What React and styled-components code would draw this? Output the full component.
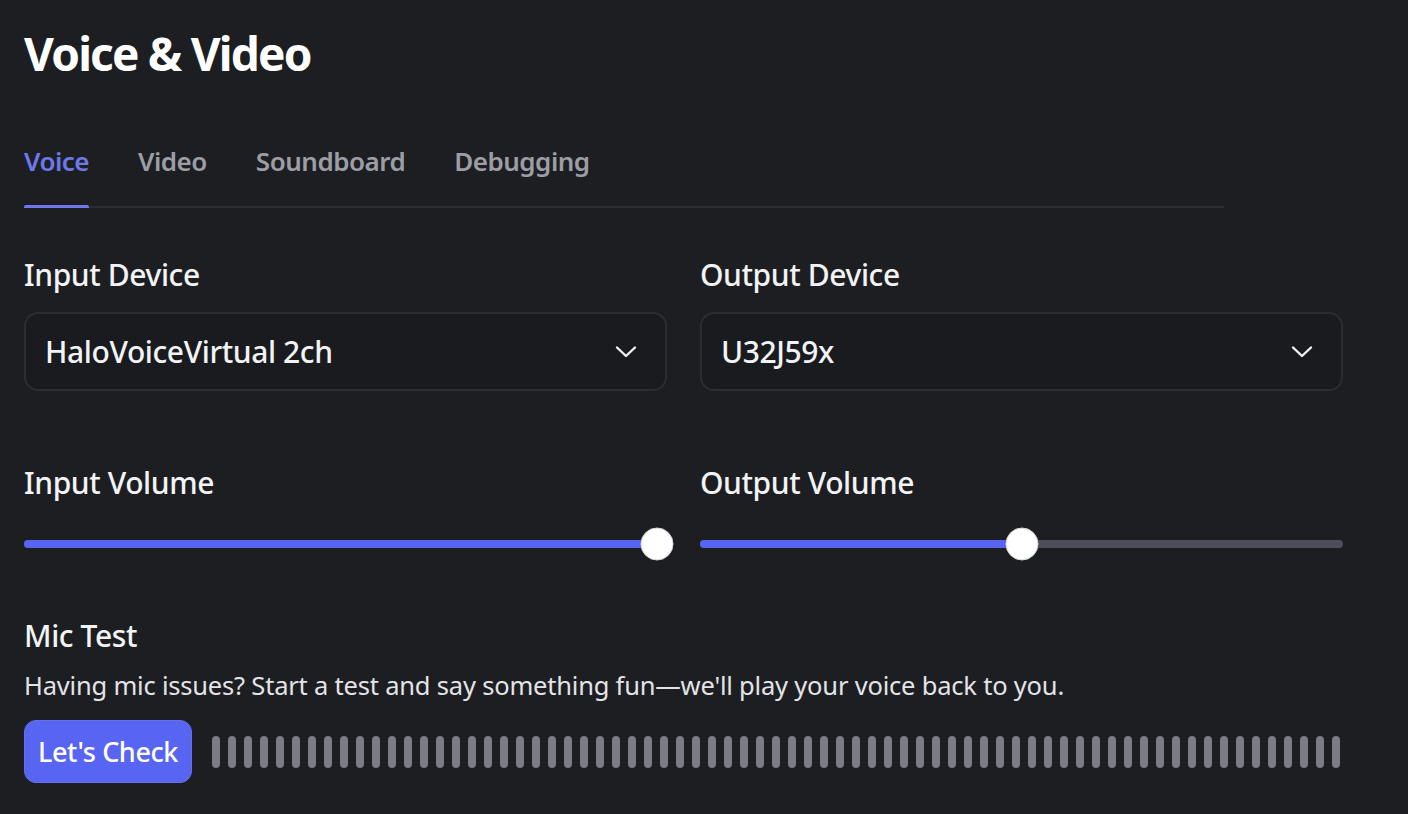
import React from 'react';
import styled, { createGlobalStyle } from 'styled-components';

const GlobalStyle = createGlobalStyle`
  body {
    margin: 0;
    background: #1d1e21;
    font-family: 'Noto Sans', 'Open Sans', sans-serif;
    color: #f2f3f5;
  }
`;

const Page = styled.div`
  padding: 23px 24px 0 24px;
  width: 1320px;
`;

const Title = styled.h1`
  margin: 0;
  font-size: 46px;
  font-weight: 700;
  line-height: 60px;
  color: #ffffff;
  letter-spacing: -1.8px;
`;

const TabList = styled.div`
  display: flex;
  gap: 49px;
  width: 1200px;
  margin-top: 62px;
  border-bottom: 2px solid #2c2d32;
`;

const Tab = styled.div`
  position: relative;
  font-size: 26px;
  font-weight: 600;
  line-height: 32px;
  padding-bottom: 29px;
  color: ${({ active }) => (active ? '#6e78ea' : '#9c9da5')};
  letter-spacing: -0.5px;

  &::after {
    content: '';
    display: ${({ active }) => (active ? 'block' : 'none')};
    position: absolute;
    left: 0;
    right: 0;
    bottom: -2px;
    height: 3px;
    border-radius: 2px 2px 0 0;
    background: #6e78ea;
  }
`;

const Grid = styled.div`
  display: grid;
  grid-template-columns: 643px 643px;
  column-gap: 33px;
  margin-top: 49px;
`;

const Field = styled.div`
  display: flex;
  flex-direction: column;
`;

const Label = styled.div`
  font-size: 30px;
  font-weight: 500;
  line-height: 36px;
  color: #f2f3f5;
  letter-spacing: -0.4px;
`;

const Select = styled.div`
  margin-top: 19px;
  height: 79px;
  box-sizing: border-box;
  border: 2px solid #2c2d31;
  border-radius: 14px;
  background: #1a1b1e;
  display: flex;
  align-items: center;
  justify-content: space-between;
  padding: 0 28px 0 19px;
  font-size: 30px;
  font-weight: 500;
  color: #f2f3f5;
  letter-spacing: -0.4px;
`;

const VolumeField = styled(Field)`
  margin-top: 74px;
`;

const Slider = styled.div`
  position: relative;
  margin-top: 39px;
  height: 8px;
  border-radius: 4px;
  background: #4e4f56;
`;

const Fill = styled.div`
  height: 100%;
  border-radius: 4px;
  background: #5865f2;
`;

const Knob = styled.div`
  position: absolute;
  top: 50%;
  width: 31px;
  height: 31px;
  border-radius: 50%;
  background: #ffffff;
  border: 1px solid #d6d7dc;
  transform: translate(-50%, -50%);
`;

const MicSection = styled.div`
  margin-top: 70px;
`;

const Description = styled.div`
  margin-top: 15px;
  font-size: 25.5px;
  line-height: 32px;
  color: #e3e4e8;
  letter-spacing: -0.2px;
`;

const MicRow = styled.div`
  display: flex;
  align-items: center;
  gap: 20px;
  margin-top: 19px;
`;

const Button = styled.button`
  height: 63px;
  padding: 0 13px;
  border: 1px solid #6570ee;
  border-radius: 12px;
  background: #5865f2;
  color: #ffffff;
  font-family: inherit;
  font-size: 27px;
  font-weight: 500;
  letter-spacing: -0.4px;
`;

const Meter = styled.div`
  display: flex;
  gap: 8px;
`;

const Bar = styled.div`
  width: 8px;
  height: 32px;
  border-radius: 4px;
  background: #7b7c85;
`;

function Chevron() {
  return (
    <svg width="22" height="14" viewBox="0 0 22 14" fill="none">
      <path d="M2 2.5 L11 11 L20 2.5" stroke="#f2f3f5" strokeWidth="2.4" strokeLinecap="round" strokeLinejoin="round" />
    </svg>
  );
}

function VolumeSlider({ value }) {
  return (
    <Slider>
      <Fill style={{ width: `${value}%` }} />
      <Knob style={{ left: `${value}%` }} />
    </Slider>
  );
}

export default function App() {
  const bars = Array.from({ length: 71 });
  return (
    <Page>
      <GlobalStyle />
      <Title>Voice &amp; Video</Title>
      <TabList>
        <Tab active>Voice</Tab>
        <Tab>Video</Tab>
        <Tab>Soundboard</Tab>
        <Tab>Debugging</Tab>
      </TabList>
      <Grid>
        <Field>
          <Label>Input Device</Label>
          <Select>
            HaloVoiceVirtual 2ch
            <Chevron />
          </Select>
        </Field>
        <Field>
          <Label>Output Device</Label>
          <Select>
            U32J59x
            <Chevron />
          </Select>
        </Field>
        <VolumeField>
          <Label>Input Volume</Label>
          <VolumeSlider value={98.4} />
        </VolumeField>
        <VolumeField>
          <Label>Output Volume</Label>
          <VolumeSlider value={50} />
        </VolumeField>
      </Grid>
      <MicSection>
        <Label>Mic Test</Label>
        <Description>
          Having mic issues? Start a test and say something fun—we'll play your voice back to you.
        </Description>
        <MicRow>
          <Button>Let's Check</Button>
          <Meter>
            {bars.map((_, i) => (
              <Bar key={i} />
            ))}
          </Meter>
        </MicRow>
      </MicSection>
    </Page>
  );
}
